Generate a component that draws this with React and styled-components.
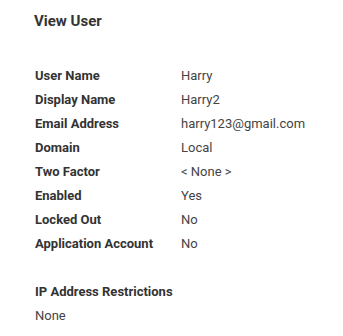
import React from "react";
import styled, { createGlobalStyle } from "styled-components";

const GlobalStyle = createGlobalStyle`
  body {
    margin: 0;
    background: #fff;
    font-family: Roboto, "Liberation Sans", Arial, sans-serif;
    color: #333;
  }
`;

const Page = styled.div`
  padding: 11px 0 0 35px;
`;

const Title = styled.h2`
  margin: 0 0 33px -1px;
  font-size: 15px;
  line-height: 20px;
  font-weight: 700;
  color: #333;
`;

const Details = styled.dl`
  display: grid;
  grid-template-columns: 146px auto;
  margin: 0;
  font-size: 13px;
  line-height: 24px;
`;

const Label = styled.dt`
  font-weight: 700;
  color: #333;
`;

const Value = styled.dd`
  margin: 0;
  color: #444;
`;

const Section = styled.div`
  margin-top: 24px;
  font-size: 13px;
  line-height: 24px;
`;

const SectionTitle = styled.div`
  font-weight: 700;
  color: #333;
`;

const SectionText = styled.div`
  color: #444;
`;

const rows = [
  ["User Name", "Harry"],
  ["Display Name", "Harry2"],
  ["Email Address", "harry123@gmail.com"],
  ["Domain", "Local"],
  ["Two Factor", "< None >"],
  ["Enabled", "Yes"],
  ["Locked Out", "No"],
  ["Application Account", "No"],
];

const App = () => {
  return (
    <Page>
      <GlobalStyle />
      <Title>View User</Title>
      <Details>
        {rows.map(([label, value]) => (
          <React.Fragment key={label}>
            <Label>{label}</Label>
            <Value>{value}</Value>
          </React.Fragment>
        ))}
      </Details>
      <Section>
        <SectionTitle>IP Address Restrictions</SectionTitle>
        <SectionText>None</SectionText>
      </Section>
    </Page>
  );
};

export default App;
